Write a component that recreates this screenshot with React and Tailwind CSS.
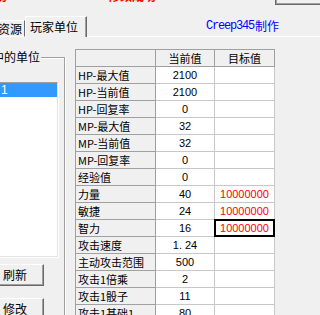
import React from "react";

const rows = [
  ["HP-最大值", "2100", ""],
  ["HP-当前值", "2100", ""],
  ["HP-回复率", "0", ""],
  ["MP-最大值", "32", ""],
  ["MP-当前值", "32", ""],
  ["MP-回复率", "0", ""],
  ["经验值", "0", ""],
  ["力量", "40", "10000000"],
  ["敏捷", "24", "10000000"],
  ["智力", "16", "10000000"],
  ["攻击速度", "1. 24", ""],
  ["主动攻击范围", "500", ""],
  ["攻击1倍乘", "2", ""],
  ["攻击1骰子", "11", ""],
  ["攻击1基础1", "80", ""],
];

const num = "font-['Liberation_Sans_Narrow','Liberation_Sans',sans-serif] text-[11px]";

const Button = ({ children, className }) => (
  <div
    className={
      "-ml-[14px] w-[58px] h-[22px] flex items-center justify-center text-[12px] text-black bg-[#f0f0f0] border-t border-l border-white border-r border-b border-r-[#696969] border-b-[#696969] shadow-[inset_-1px_-1px_0_#a0a0a0] " +
      className
    }
  >
    {children}
  </div>
);

export default function App() {
  return (
    <div className="w-[320px] h-[315px] overflow-hidden bg-[#f0f0f0] font-['Noto_Sans_CJK_SC',sans-serif] text-black">
      {/* top strip, mostly scrolled away */}
      <div className="h-[16px] flex items-start overflow-hidden">
        <div className="-ml-[5px] -mt-[10px] text-[12px] leading-[12px] font-bold text-[#ff0000]">功</div>
        <div className="ml-[101px] -mt-[10px] text-[12px] leading-[12px] font-bold text-[#ff0000] whitespace-nowrap">修改成功</div>
        <div className="flex-1" />
        <div className="w-[45px] h-[5px] border-l border-b border-[#696969] shadow-[inset_1px_-1px_0_#a0a0a0]" />
      </div>

      {/* tab strip */}
      <div className="h-[21px] flex items-end">
        <div className="-ml-[10px] w-[35px] h-[17px] border-t border-b border-white border-r border-r-[#696969] flex items-start pt-[1px] pl-[8px] text-[12px] leading-[14px] whitespace-nowrap">
          资源
        </div>
        <div className="w-[62px] h-[21px] border-t border-l border-white border-r border-r-[#696969] shadow-[inset_-1px_0_0_#a0a0a0] flex items-start pt-[2px] pl-[4px] text-[12px] leading-[15px] whitespace-nowrap">
          玩家单位
        </div>
        <div className="flex-1 h-full border-b border-white flex items-center pl-[119px] text-[#0000ff] whitespace-nowrap">
          <span className="font-['Liberation_Mono',monospace] text-[12px] tracking-[-1.2px]">Creep345</span>
          <span className="text-[12px] ml-[1px]">制作</span>
        </div>
      </div>

      {/* tab page */}
      <div className="flex items-start">
        {/* group box */}
        <div className="mt-[20px] w-[65px] h-[300px] border-t border-r border-[#a0a0a0] shadow-[inset_0_1px_0_#fff,1px_0_0_#fff] flex flex-col">
          <div className="-mt-[8px] -ml-[32px] w-fit pr-[1px] h-[14px] bg-[#f0f0f0] text-[12px] leading-[14px] whitespace-nowrap">
            游戏中的单位
          </div>
          <div className="mt-[18px] -ml-[10px] w-[68px] h-[175px] bg-white border-t border-[#a0a0a0] border-r border-b border-r-[#e3e3e3] border-b-[#e3e3e3] shadow-[1px_1px_0_#fff]">
            <div className="h-[14px] bg-[#3399ff] text-white text-[12px] leading-[14px] pl-[11px] font-['Liberation_Sans',sans-serif]">
              1
            </div>
          </div>
          <Button className="mt-[7px]">刷新</Button>
          <Button className="mt-[12px]">修改</Button>
        </div>

        {/* data grid */}
        <div className="ml-[10px] mt-[12px] flex flex-col border-l border-t border-[#a0a0a0]">
          <div className="flex h-[17px]">
            <div className="w-[80px] border-r border-b border-[#a0a0a0] bg-[#f0f0f0]" />
            <div className="w-[59px] border-r border-b border-[#a0a0a0] bg-[#f0f0f0] flex items-center justify-center text-[11px]">
              当前值
            </div>
            <div className="w-[60px] border-r border-b border-[#a0a0a0] bg-[#f0f0f0] flex items-center justify-center text-[11px]">
              目标值
            </div>
          </div>
          {rows.map(([name, cur, target], i) => (
            <div key={i} className="flex h-[17px]">
              <div className="w-[80px] border-r border-b border-[#a0a0a0] bg-[#f0f0f0] flex items-center pl-[2px] text-[11px] whitespace-nowrap">
                {name}
              </div>
              <div className={"w-[59px] border-r border-b border-[#c8c8c8] bg-white flex items-center justify-center " + num}>
                {cur}
              </div>
              <div className={"relative w-[60px] border-r border-b border-[#c8c8c8] bg-white flex items-center justify-center text-[#ff0000] " + num}>
                {target}
                {i === 9 && <div className="absolute -inset-px border-2 border-black" />}
              </div>
            </div>
          ))}
        </div>
      </div>
    </div>
  );
}
